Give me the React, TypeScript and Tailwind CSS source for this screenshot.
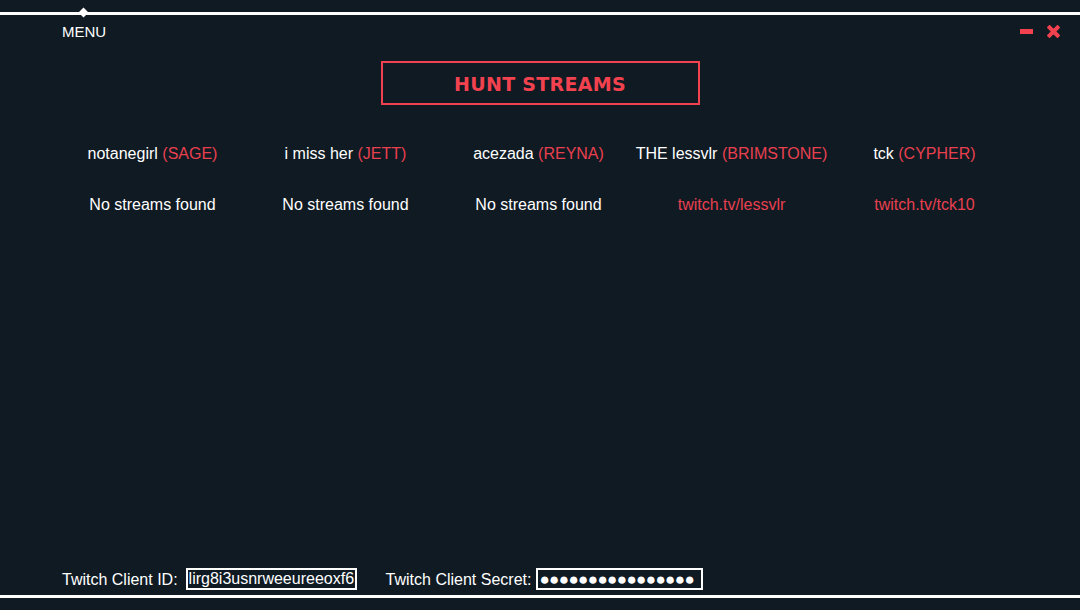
import React from 'react';

const hunts = [
    { name: 'notanegirl', agent: 'SAGE', stream: null },
    { name: 'i miss her', agent: 'JETT', stream: null },
    { name: 'acezada', agent: 'REYNA', stream: null },
    { name: 'THE lessvlr', agent: 'BRIMSTONE', stream: 'twitch.tv/lessvlr' },
    { name: 'tck', agent: 'CYPHER', stream: 'twitch.tv/tck10' },
];

export default function App() {
    return (
        <div className="w-[1080px] h-[610px] bg-[#0f1a23] flex flex-col text-white font-['Liberation_Sans',Arial,sans-serif] text-[16px] overflow-hidden">
            {/* top bar */}
            <div className="relative h-[3px] mt-[12px] bg-white">
                <div className="absolute left-[80px] top-[-3px] w-[7px] h-[7px] bg-white rotate-45" />
            </div>
            <div className="flex items-center justify-between pl-[62px] pr-[20px] h-[32px]">
                <span className="leading-none text-[15px]">MENU</span>
                <div className="flex items-center gap-[14px]">
                    <div className="w-[13px] h-[5px] bg-[#f2424f]" />
                    <svg width="13" height="13" viewBox="0 0 13 13">
                        <path d="M2.5 2.5 L10.5 10.5 M10.5 2.5 L2.5 10.5" stroke="#f2424f" strokeWidth="4" strokeLinecap="square" />
                    </svg>
                </div>
            </div>

            <div className="flex justify-center mt-[14px]">
                <div className="w-[319px] h-[44px] border-2 border-[#f2424f] flex items-center justify-center">
                    <span className="font-['DejaVu_Sans',Verdana,sans-serif] font-bold text-[19px] text-[#f2424f] tracking-[0.3px] mt-[2px]">HUNT STREAMS</span>
                </div>
            </div>

            <div className="grid grid-cols-5 ml-[56px] w-[965px] mt-[39px] gap-y-[31px]">
                {hunts.map((h) => (
                    <div key={h.name} className="text-center leading-[20px]">
                        {h.name} <span className="text-[#e8404f]">({h.agent})</span>
                    </div>
                ))}
                {hunts.map((h) => (
                    <div key={h.name + 's'} className="text-center leading-[20px]">
                        {h.stream ? <span className="text-[#e8404f]">{h.stream}</span> : 'No streams found'}
                    </div>
                ))}
            </div>

            <div className="flex-1" />

            <div className="flex items-center pl-[62px] h-[22px] mb-[5px]">
                <span className="mt-[2px]">Twitch Client ID:</span>
                <div className="ml-[8px] w-[171px] h-[22px] border-2 border-white flex items-center px-[1px] overflow-hidden whitespace-nowrap leading-none">
                    lirg8i3usnrweeureeoxf6
                </div>
                <span className="ml-[29px] mt-[2px]">Twitch Client Secret:</span>
                <div className="ml-[5px] w-[167px] h-[22px] border-2 border-white flex items-center px-[1px] overflow-hidden whitespace-nowrap leading-none text-[17px] tracking-[-0.6px]">
                    ●●●●●●●●●●●●●●●●
                </div>
            </div>
            <div className="h-[3px] bg-white mb-[12px]" />
        </div>
    );
}
